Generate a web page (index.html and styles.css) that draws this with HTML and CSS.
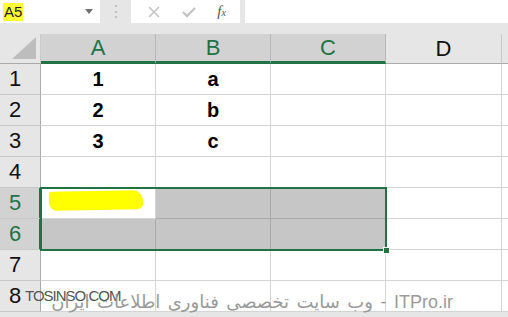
FILE: index.html
```html
<!DOCTYPE html>
<html lang="en">
<head>
    <meta charset="UTF-8">
    <title>Excel - A5</title>
    <link rel="stylesheet" href="styles.css">
</head>
<body>
    <div class="app">
        <div class="formula-bar">
            <div class="name-box">
                <span class="name-value">A5</span>
                <span class="name-arrow"></span>
            </div>
            <div class="grip">&#8942;</div>
            <div class="fx-buttons">
                <svg class="fx-icon" width="14" height="14" viewBox="0 0 14 14"><path d="M2 2L12 12M12 2L2 12" stroke="#c4c4c4" stroke-width="1.6" fill="none"/></svg>
                <svg class="fx-icon" width="16" height="14" viewBox="0 0 16 14"><path d="M2 7L6 11L14 3" stroke="#c4c4c4" stroke-width="2.4" fill="none"/></svg>
                <span class="fx-label">f<sub>x</sub></span>
            </div>
            <div class="formula-input"></div>
        </div>

        <div class="sheet">
            <div class="corner"><span class="corner-tri"></span></div>
            <div class="col-head selected">A</div>
            <div class="col-head selected">B</div>
            <div class="col-head selected">C</div>
            <div class="col-head">D</div>
            <div class="col-head edge"></div>

            <div class="row-head">1</div>
            <div class="cell">1</div><div class="cell">a</div><div class="cell"></div><div class="cell"></div><div class="cell edge"></div>

            <div class="row-head">2</div>
            <div class="cell">2</div><div class="cell">b</div><div class="cell"></div><div class="cell"></div><div class="cell edge"></div>

            <div class="row-head">3</div>
            <div class="cell">3</div><div class="cell">c</div><div class="cell"></div><div class="cell"></div><div class="cell edge"></div>

            <div class="row-head">4</div>
            <div class="cell"></div><div class="cell"></div><div class="cell"></div><div class="cell"></div><div class="cell edge"></div>

            <div class="row-head selected">5</div>
            <div class="cell active"><span class="marker"></span></div><div class="cell picked"></div><div class="cell picked"></div><div class="cell"></div><div class="cell edge"></div>

            <div class="row-head selected">6</div>
            <div class="cell picked"></div><div class="cell picked"></div><div class="cell picked"></div><div class="cell"></div><div class="cell edge"></div>

            <div class="row-head">7</div>
            <div class="cell"></div><div class="cell"></div><div class="cell"></div><div class="cell"></div><div class="cell edge"></div>

            <div class="row-head">8</div>
            <div class="cell"></div><div class="cell"></div><div class="cell"></div><div class="cell"></div><div class="cell edge"></div>

            <div class="selection"><span class="fill-handle"></span></div>
        </div>

        <div class="watermark">
            <span class="wm-site">TOSINSO.COM</span>
            <span class="wm-text" dir="rtl">ITPro.ir - وب سایت تخصصی فناوری اطلاعات ایران</span>
        </div>
    </div>
</body>
</html>
```

FILE: styles.css
```css
* {
    box-sizing: border-box;
}
body {
    margin: 0;
    background: #ffffff;
    font-family: 'Liberation Sans', Arial, sans-serif;
    overflow: hidden;
}
.app {
    position: relative;
    width: 508px;
    height: 317px;
    overflow: hidden;
    background: #e6e6e6;
}
.formula-bar {
    display: flex;
    height: 34px;
    padding-bottom: 11px;
    background: #e6e6e6;
}
.name-box {
    width: 100px;
    background: #fff;
    display: flex;
    align-items: center;
    justify-content: space-between;
    padding: 0 7px 0 3px;
}
.name-value {
    background: #ffff33;
    font-size: 15px;
    color: #222;
    padding: 1px 1px;
    line-height: 16px;
}
.name-arrow {
    width: 0;
    height: 0;
    border-left: 4px solid transparent;
    border-right: 4px solid transparent;
    border-top: 5px solid #707070;
}
.grip {
    width: 31px;
    text-align: center;
    color: #b8b8b8;
    font-size: 16px;
    line-height: 23px;
}
.fx-buttons {
    width: 109px;
    background: #fff;
    display: flex;
    align-items: center;
    justify-content: space-around;
    padding: 0 4px 0 6px;
}
.fx-label {
    font-family: 'Liberation Serif', serif;
    font-style: italic;
    font-size: 15px;
    color: #555;
}
.fx-label sub {
    font-size: 10px;
    vertical-align: 0;
}
.formula-input {
    flex: 1;
    margin-left: 5px;
    background: #fff;
}
.sheet {
    position: relative;
    display: grid;
    grid-template-columns: 41px 115px 115px 115px 116px 6px;
    grid-template-rows: 30px repeat(8, 31px);
    background: #fff;
}
.corner {
    background: #e6e6e6;
    border-right: 1px solid #c8c8c8;
    border-bottom: 1px solid #ababab;
    position: relative;
}
.corner-tri {
    position: absolute;
    right: 4px;
    bottom: 4px;
    width: 0;
    height: 0;
    border-left: 24px solid transparent;
    border-bottom: 22px solid #bdbdbd;
}
.col-head {
    background: #e6e6e6;
    border-right: 1px solid #c8c8c8;
    border-bottom: 1px solid #ababab;
    display: flex;
    align-items: center;
    justify-content: center;
    font-size: 22px;
    color: #111;
}
.col-head.selected {
    background: #d2d2d2;
    color: #217346;
    border-bottom: 3px solid #217346;
    border-right-color: #b8b8b8;
}
.col-head.edge {
    border-right: none;
}
.row-head {
    background: #e6e6e6;
    border-right: 1px solid #ababab;
    border-bottom: 1px solid #c8c8c8;
    display: flex;
    align-items: center;
    padding-left: 9px;
    font-size: 22px;
    color: #111;
}
.row-head.selected {
    background: #d2d2d2;
    color: #217346;
    border-right: 2px solid #217346;
}
.cell {
    border-right: 1px solid #d4d4d4;
    border-bottom: 1px solid #d4d4d4;
    display: flex;
    align-items: center;
    justify-content: center;
    font-size: 20px;
    font-weight: bold;
    color: #000;
}
.cell.edge {
    border-right: none;
}
.cell.picked {
    background: #c6c6c6;
    border-color: #ababab;
}
.cell.active {
    justify-content: flex-start;
    padding-left: 8px;
}
.marker {
    width: 94px;
    height: 19px;
    background: #ffff00;
    border-radius: 3px 10px 6px 8px;
    transform: rotate(-1deg);
    margin-top: -6px;
}
.selection {
    position: absolute;
    left: 40px;
    top: 153px;
    width: 347px;
    height: 64px;
    border: 2px solid #217346;
    pointer-events: none;
}
.fill-handle {
    position: absolute;
    right: -5px;
    bottom: -5px;
    width: 7px;
    height: 7px;
    background: #217346;
    border: 1px solid #fff;
}
.watermark {
    position: absolute;
    left: 0;
    top: 280px;
    width: 508px;
    height: 37px;
    pointer-events: none;
}
.wm-site {
    position: absolute;
    left: 25px;
    top: 7px;
    font-size: 15px;
    color: #555;
    letter-spacing: -1px;
}
.wm-text {
    position: absolute;
    right: 55px;
    top: 11px;
    font-size: 18px;
    color: #9a9a9a;
    white-space: nowrap;
    word-spacing: 2.5px;
    font-family: 'Liberation Sans', 'DejaVu Sans', sans-serif;
}
```
